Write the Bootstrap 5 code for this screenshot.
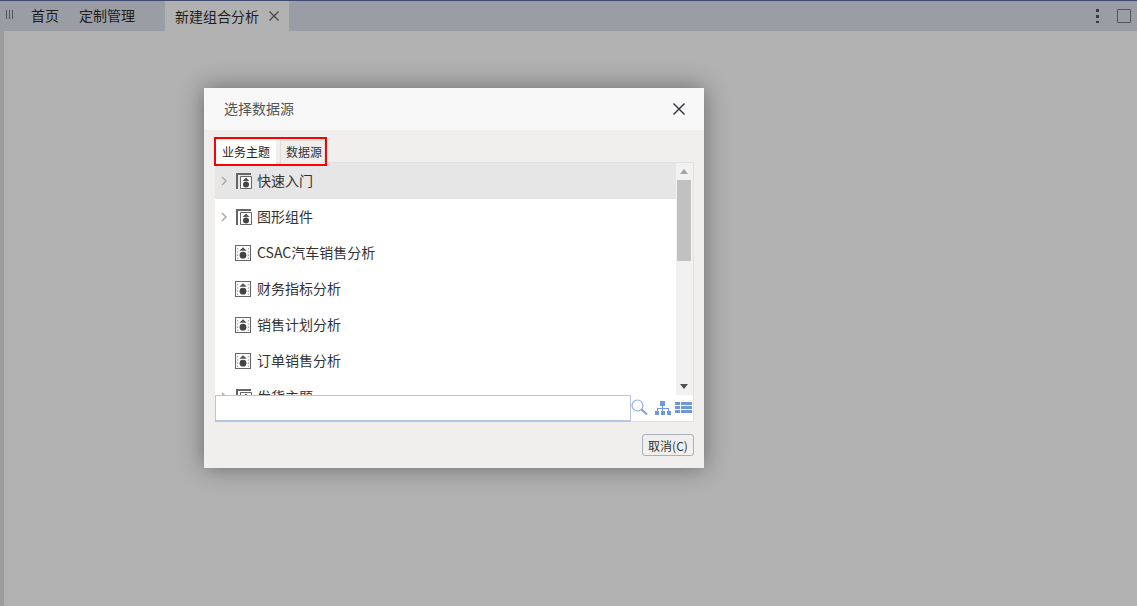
<!DOCTYPE html>
<html lang="zh-CN">

<head>
    <meta charset="UTF-8">
    <title>新建组合分析</title>
    <link href="https://cdn.jsdelivr.net/npm/bootstrap@5.3.0/dist/css/bootstrap.min.css" rel="stylesheet">
    <style>
        html, body { height: 100%; overflow: hidden; }
        body {
            background: #b1b1b1;
            font-family: "Noto Sans CJK SC", "Liberation Sans", sans-serif;
            font-size: 14px;
            color: #222;
        }
        .top-bar { height: 31px; background: #9b9da4; border-top: 1px solid #3f4a70; }
        .grip { width: 21px; flex-shrink: 0; }
        .grip svg { margin: -3px 0 0 5px; }
        .top-tab { height: 30px; line-height: 28px; padding: 0 10px; color: #1d1d1d; }
        .top-tab.now { background: #b1b1b1; width: 124px; margin-left: 20px; flex-shrink: 0; }
        .top-close { margin-left: 10px; flex-shrink: 0; }
        .top-dots { margin-right: 17px; }
        .top-max { margin-right: 6px; }
        .page-edge { width: 4px; background: #9c9c9c; }
        .page-main { height: 575px; }
        .dlg {
            position: absolute; left: 204px; top: 88px; width: 500px; height: 380px;
            background: #f0efed;
            box-shadow: 0 0 22px rgba(0, 0, 0, .4);
        }
        .dlg-head { height: 42px; background: #f8f8f8; padding: 0 19px 1px 20px; color: #555; }
        .tabs-box { margin: 7px 0 0 10px; width: 113px; height: 29px; border: 2px solid #f00; padding: 1px 0 0 0; position: relative; z-index: 1; }
        .src-tab { height: 24px; line-height: 23px; font-size: 12px; color: #222; white-space: nowrap; flex-shrink: 0; }
        .src-tab.now { background: #fff; width: 60px; padding: 0 0 0 6px; }
        .src-tab.off { background: #efeeec; border: 1px solid #dfdedc; border-bottom: 0; margin-left: 4px; width: 45px; padding: 0 0 0 5px; line-height: 22px; color: #333; }
        .src-panel { margin: -4px 10px 0 11px; height: 260px; background: #fff; border: 1px solid #e2e1df; border-left: 0; }
        .tree-wrap { height: 232px; overflow: hidden; }
        .tree-list { width: 461px; height: 232px; overflow: hidden; flex-shrink: 0; }
        .tree-row { height: 36px; color: #333; padding-left: 3px; }
        .tree-row.now { background: #e6e6e6; }
        .tree-arrow { width: 17px; flex-shrink: 0; }
        .tree-arrow svg { margin-left: 3px; }
        .tree-icon { width: 16px; height: 16px; flex-shrink: 0; }
        .tree-icon.is-folder { margin-left: 1px; margin-right: -1px; }
        .tree-label { margin-left: 6px; padding-bottom: 1px; }
        .scroll-side { width: 17px; background: #f1f1f1; position: relative; }
        .scroll-thumb { position: absolute; left: 1px; top: 17px; width: 14px; height: 81px; background: #c1c1c1; }
        .scroll-up, .scroll-down { position: absolute; left: 4px; width: 0; height: 0; border-left: 4px solid transparent; border-right: 4px solid transparent; }
        .scroll-up { top: 6px; border-bottom: 5px solid #a3a3a3; }
        .scroll-down { bottom: 6px; border-top: 5px solid #505050; }
        .search-row { height: 27px; }
        .search-box { width: 416px; height: 27px; flex-shrink: 0; border: 1px solid #b5c7e3; border-bottom-width: 2px; background: #fff; }
        .search-row svg { flex-shrink: 0; margin-bottom: 2px; }
        .search-row svg.tool-tree { margin-left: 7px; }
        .search-row svg.tool-list { margin-left: 4px; }
        .dlg-foot { padding: 12px 10px 0 0; }
        .btn-cancel { width: 52px; height: 22px; padding: 0; font-size: 12px; line-height: 19px; color: #333; background: #f0efed; border: 1px solid #a9b0ba; border-radius: 3px; }
    </style>
</head>

<body>
    <svg width="0" height="0" class="d-block position-absolute">
        <symbol id="ic-folder" viewBox="0 0 16 16">
            <path d="M0 0h15v2H2v14H0z" fill="#666"/>
            <path d="M4.500 3.500h11v12h-11z" fill="#fff" stroke="#666"/>
            <path d="M10 4.500l3.500 3.500h-7z" fill="#555"/>
            <circle cx="10" cy="11.500" r="3" fill="#444"/>
        </symbol>
        <symbol id="ic-topic" viewBox="0 0 15 15">
            <path d="M.500.500h14v14H.500z" fill="#fff" stroke="#666"/>
            <path d="M7.500 2l3.500 3.500H4z" fill="#555"/>
            <circle cx="7.500" cy="9.500" r="3.200" fill="#444"/>
            <path d="M2 3h1v1H2zM2 6h1v1H2zM2 9h1v1H2zM2 12h1v1H2zM12 3h1v1h-1zM12 6h1v1h-1zM12 9h1v1h-1zM12 12h1v1h-1z" fill="#777"/>
        </symbol>
    </svg>

    <div class="top-bar d-flex align-items-center">
        <div class="grip">
            <svg width="9" height="9" class="d-block"><path d="M1.500 0v9M4.500 0v9M7.500 0v9" stroke="#555"/></svg>
        </div>
        <div class="top-tab">首页</div>
        <div class="top-tab">定制管理</div>
        <div class="top-tab now d-flex align-items-center">
            <span>新建组合分析</span>
            <svg width="10" height="10" class="top-close"><path d="M.500.500l9 9M9.500.500l-9 9" stroke="#444" stroke-width="1.200"/></svg>
        </div>
        <div class="ms-auto d-flex align-items-center">
            <svg width="4" height="14" class="top-dots"><path d="M0 0h3v3H0zM0 6h3v3H0zM0 12h3v2H0z" fill="#3c3c3c"/></svg>
            <svg width="14" height="14" class="top-max"><path d="M.500.500h13v13H.500z" fill="none" stroke="#555"/></svg>
        </div>
    </div>
    <div class="d-flex page-main">
        <div class="page-edge"></div>
    </div>

    <div class="dlg">
        <div class="dlg-head d-flex align-items-center justify-content-between">
            <span>选择数据源</span>
            <svg width="12" height="12"><path d="M.500.500l11 11M11.500.500l-11 11" stroke="#2c2c3a" stroke-width="1.400"/></svg>
        </div>
        <div class="tabs-box d-flex">
            <div class="src-tab now">业务主题</div>
            <div class="src-tab off">数据源</div>
        </div>
        <div class="src-panel">
            <div class="tree-wrap d-flex">
                <div class="tree-list" id="treeList"></div>
                <div class="scroll-side">
                    <div class="scroll-up"></div>
                    <div class="scroll-thumb"></div>
                    <div class="scroll-down"></div>
                </div>
            </div>
            <div class="search-row d-flex align-items-center">
                <div class="search-box"></div>
                <svg width="17" height="17" viewBox="0 0 17 17"><circle cx="6.500" cy="6.500" r="5.500" fill="none" stroke="#8fb0e0" stroke-width="1.200"/><path d="M10.500 10.500l5.500 5" stroke="#7f9fd6" stroke-width="2"/></svg>
                <svg width="16" height="14" class="tool-tree" viewBox="0 0 16 14"><path d="M5 0h5v5H5zM0 10h4v4H0zM6 10h4v4H6zM12 10h4v4h-4zM7 5h1v2h6v3h-1V8H8v2H7V8H3v2H2V7h5z" fill="#6f98dc"/></svg>
                <svg width="17" height="11" class="tool-list" viewBox="0 0 17 11"><path d="M0 0h5v3H0zM6 0h11v3H6zM0 4h5v3H0zM6 4h11v3H6zM0 8h5v3H0zM6 8h11v3H6z" fill="#6f98dc"/></svg>
            </div>
        </div>
        <div class="dlg-foot d-flex justify-content-end">
            <button class="btn-cancel">取消(C)</button>
        </div>
    </div>

    <script src="https://cdn.jsdelivr.net/npm/bootstrap@5.3.0/dist/js/bootstrap.bundle.min.js"></script>
    <script>
        const rows = [
            { text: "快速入门", folder: true, now: true },
            { text: "图形组件", folder: true },
            { text: "CSAC汽车销售分析" },
            { text: "财务指标分析" },
            { text: "销售计划分析" },
            { text: "订单销售分析" },
            { text: "发货主题", folder: true }
        ];
        const arrow = '<svg width="7" height="10" class="d-block"><path d="M1 1l4 4-4 4" fill="none" stroke="#aaa" stroke-width="1.500"/></svg>';
        document.getElementById("treeList").innerHTML = rows.map(r => `
            <div class="tree-row d-flex align-items-center${r.now ? " now" : ""}">
                <div class="tree-arrow">${r.folder ? arrow : ""}</div>
                <svg class="tree-icon${r.folder ? " is-folder" : ""}"><use href="#${r.folder ? "ic-folder" : "ic-topic"}"/></svg>
                <span class="tree-label">${r.text}</span>
            </div>`).join("");
    </script>
</body>

</html>
